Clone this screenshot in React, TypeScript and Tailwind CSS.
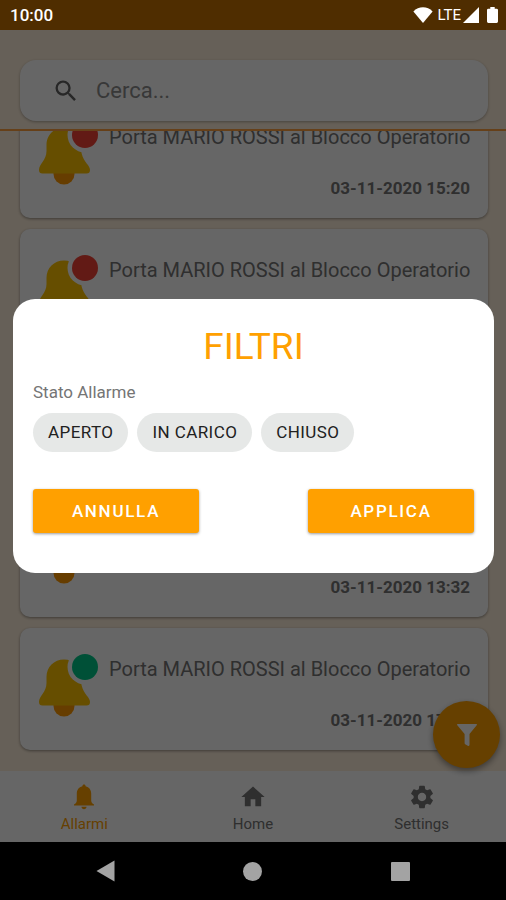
import { useState } from "react";
import { MdHome, MdSearch, MdSettings } from "react-icons/md";

type AlarmState = "aperto" | "chiuso";

interface Alarm {
  id: number;
  title: string;
  date: string;
  state: AlarmState;
}

const ALARMS: Alarm[] = [
  { id: 1, title: "Porta MARIO ROSSI al Blocco Operatorio", date: "03-11-2020 15:20", state: "aperto" },
  { id: 2, title: "Porta MARIO ROSSI al Blocco Operatorio", date: "03-11-2020 15:04", state: "aperto" },
  { id: 3, title: "Porta MARIO ROSSI al Blocco Operatorio", date: "03-11-2020 14:10", state: "aperto" },
  { id: 4, title: "Porta MARIO ROSSI al Blocco Operatorio", date: "03-11-2020 13:32", state: "chiuso" },
  { id: 5, title: "Porta MARIO ROSSI al Blocco Operatorio", date: "03-11-2020 17:15", state: "chiuso" },
];

const DOT_COLORS: Record<AlarmState, string> = {
  aperto: "#f44336",
  chiuso: "#00c98a",
};

const FILTERS = ["APERTO", "IN CARICO", "CHIUSO"];

function BellIcon({ className }: { className?: string }) {
  return (
    <svg className={className} viewBox="0 0 28 28" fill="currentColor">
      <path d="M14 1.6 C14.9 1.6 15.6 2.3 15.6 3.2 C19.2 4 21.2 6.9 21.2 10.6 V17.4 C21.2 19.4 22.4 20.6 24 21.4 V22.4 H4 V21.4 C5.6 20.6 6.8 19.4 6.8 17.4 V10.6 C6.8 6.9 8.8 4 12.4 3.2 C12.4 2.3 13.1 1.6 14 1.6 Z" />
      <path d="M11.4 23.8 H16.6 C16.4 25.3 15.4 26.2 14 26.2 C12.6 26.2 11.6 25.3 11.4 23.8 Z" />
    </svg>
  );
}

const TABS = [
  { label: "Allarmi", Icon: BellIcon },
  { label: "Home", Icon: MdHome },
  { label: "Settings", Icon: MdSettings },
];

function StatusBar() {
  return (
    <div className="flex h-[30px] shrink-0 items-center justify-between bg-[#4f2d00] pr-2 pl-[10px] text-white">
      <span className="text-[17px] leading-5 font-medium">10:00</span>
      <div className="flex items-center">
        <svg width="20" height="16" viewBox="0 0 20 16" fill="currentColor">
          <path d="M10 16 L0.4 4.4 C5.6 -1 14.4 -1 19.6 4.4 Z" />
        </svg>
        <span className="ml-1 text-[15px] leading-5">LTE</span>
        <svg className="ml-0.5" width="16" height="16" viewBox="0 0 16 16" fill="currentColor">
          <path d="M16 0 V16 H0 Z" />
        </svg>
        <svg className="ml-2" width="11" height="16" viewBox="0 0 11 16" fill="currentColor">
          <path d="M3.3 0 H7.7 V1.7 H9.6 Q11 1.7 11 3.1 V14.6 Q11 16 9.6 16 H1.4 Q0 16 0 14.6 V3.1 Q0 1.7 1.4 1.7 H3.3 Z" />
        </svg>
      </div>
    </div>
  );
}

// Bell with a state dot; the white circle cuts the bell around the dot.
function AlarmBell({ state }: { state: AlarmState }) {
  return (
    <svg className="shrink-0" width="62" height="66" viewBox="0 0 62 66">
      <path d="M15.5 51 H36.5 V54 A10.5 10.5 0 0 1 15.5 54 Z" fill="#ff9800" />
      <path
        d="M26 7.5 C16 7.5 8.5 15 8.5 25 V31 C8.5 40 1 44 1 50 Q1 53.5 4.5 53.5 H48.5 Q52 53.5 52 50 C52 45 46 43 43.5 33 V25 C43.5 15 36 7.5 26 7.5 Z"
        fill="#ffc400"
      />
      <circle cx="47" cy="15" r="17.5" fill="#fff" />
      <circle cx="47" cy="15" r="13" fill={DOT_COLORS[state]} />
    </svg>
  );
}

function AlarmCard({ alarm }: { alarm: Alarm }) {
  return (
    <li className="flex h-[122px] shrink-0 rounded-[10px] bg-white px-[18px] pt-6 shadow-[0_1px_3px_rgba(0,0,0,0.4)]">
      <AlarmBell state={alarm.state} />
      <div className="flex min-w-0 flex-1 flex-col pl-[9px]">
        <h2 className="mt-[3px] text-[20px] leading-7 whitespace-nowrap text-[#757575]">{alarm.title}</h2>
        <time className="mt-[25px] text-right text-[17px] leading-6 font-bold text-[#757575]">{alarm.date}</time>
      </div>
    </li>
  );
}

function FilterDialog() {
  const [selected, setSelected] = useState<string[]>([]);

  const toggle = (name: string) =>
    setSelected((prev) => (prev.includes(name) ? prev.filter((n) => n !== name) : [...prev, name]));

  const actionClass =
    "h-11 w-[166px] rounded-[3px] bg-[#ffa000] pt-0.5 text-[17px] font-medium tracking-widest text-white shadow-[0_1px_3px_rgba(0,0,0,0.4)]";

  return (
    <div role="dialog" aria-labelledby="filter-title" className="w-full rounded-[22px] bg-white px-5 pt-6 pb-10">
      <h1 id="filter-title" className="text-center text-[37px] leading-[48px] text-[#ffa000]">
        FILTRI
      </h1>
      <p className="mt-[9px] text-[17px] leading-6 text-[#757575]">Stato Allarme</p>
      <div className="mt-[9px] flex gap-[9px]">
        {FILTERS.map((name) => (
          <button
            key={name}
            type="button"
            aria-pressed={selected.includes(name)}
            className={
              "h-[39px] rounded-full px-[15px] text-[17px] tracking-wide text-[#212121] " +
              (selected.includes(name) ? "bg-[#ffd58a]" : "bg-[#e6e8e7]")
            }
            onClick={() => toggle(name)}
          >
            {name}
          </button>
        ))}
      </div>
      <div className="mt-[37px] flex justify-between">
        <button type="button" className={actionClass} onClick={() => setSelected([])}>
          ANNULLA
        </button>
        <button type="button" className={actionClass}>
          APPLICA
        </button>
      </div>
    </div>
  );
}

function SystemNav() {
  return (
    <div className="grid h-[58px] shrink-0 grid-cols-3 items-center justify-items-center bg-black px-8 text-[#a3a3a3]">
      <button type="button" aria-label="Indietro">
        <svg width="19" height="22" viewBox="0 0 19 22" fill="currentColor">
          <path d="M18.5 0.5 V21.5 L0.5 11 Z" />
        </svg>
      </button>
      <button type="button" aria-label="Home" className="size-[19px] rounded-full bg-[#a3a3a3]" />
      <button type="button" aria-label="Recenti" className="size-[19px] rounded-[1px] bg-[#a3a3a3]" />
    </div>
  );
}

export default function App() {
  return (
    <div className="flex h-screen flex-col font-[Roboto,sans-serif]">
      <StatusBar />
      <div className="relative flex min-h-0 flex-1 flex-col bg-[#fff0dc]">
        <header className="border-b-2 border-[#ffa040] pt-[30px] pr-[18px] pb-2 pl-5">
          <label className="flex h-[61px] items-center rounded-[16px] bg-white pl-8 shadow-[0_1px_3px_rgba(0,0,0,0.3)]">
            <MdSearch className="size-7 text-[#616161]" />
            <input
              type="text"
              aria-label="Cerca"
              placeholder="Cerca..."
              className="ml-4 min-w-0 flex-1 text-[22px] outline-none placeholder:text-[#8c8c8c]"
            />
          </label>
        </header>

        <ul className="flex min-h-0 flex-1 flex-col justify-end gap-[11px] overflow-hidden pr-[18px] pb-[21px] pl-5">
          {ALARMS.map((alarm) => (
            <AlarmCard key={alarm.id} alarm={alarm} />
          ))}
        </ul>

        <nav className="grid h-[71px] shrink-0 grid-cols-3 bg-white">
          {TABS.map(({ label, Icon }, i) => (
            <a
              key={label}
              href={"#" + label.toLowerCase()}
              className={"flex flex-col items-center pt-3 " + (i === 0 ? "text-[#ffa000]" : "text-[#757575]")}
            >
              <Icon className="size-7" />
              <span className="mt-[3px] text-[15px] leading-5">{label}</span>
            </a>
          ))}
        </nav>

        <button
          type="button"
          aria-label="Filtri"
          className="absolute right-[6px] bottom-[74px] flex size-[67px] items-center justify-center rounded-full bg-[#ffa000] text-white shadow-[0_3px_6px_rgba(0,0,0,0.4)]"
        >
          <svg width="20" height="22" viewBox="0 0 20 22" fill="currentColor">
            <path d="M0.6 0 H19.4 Q20.4 0.3 19.7 1.2 L12.5 10 V21 Q12 22.4 10.8 21.8 L8.2 20.2 Q7.6 19.8 7.6 19 V10 L0.3 1.2 Q-0.4 0.3 0.6 0 Z" />
          </svg>
        </button>

        <div className="absolute inset-0 flex items-center bg-black/60 pr-3 pl-[13px]">
          <FilterDialog />
        </div>
      </div>
      <SystemNav />
    </div>
  );
}
